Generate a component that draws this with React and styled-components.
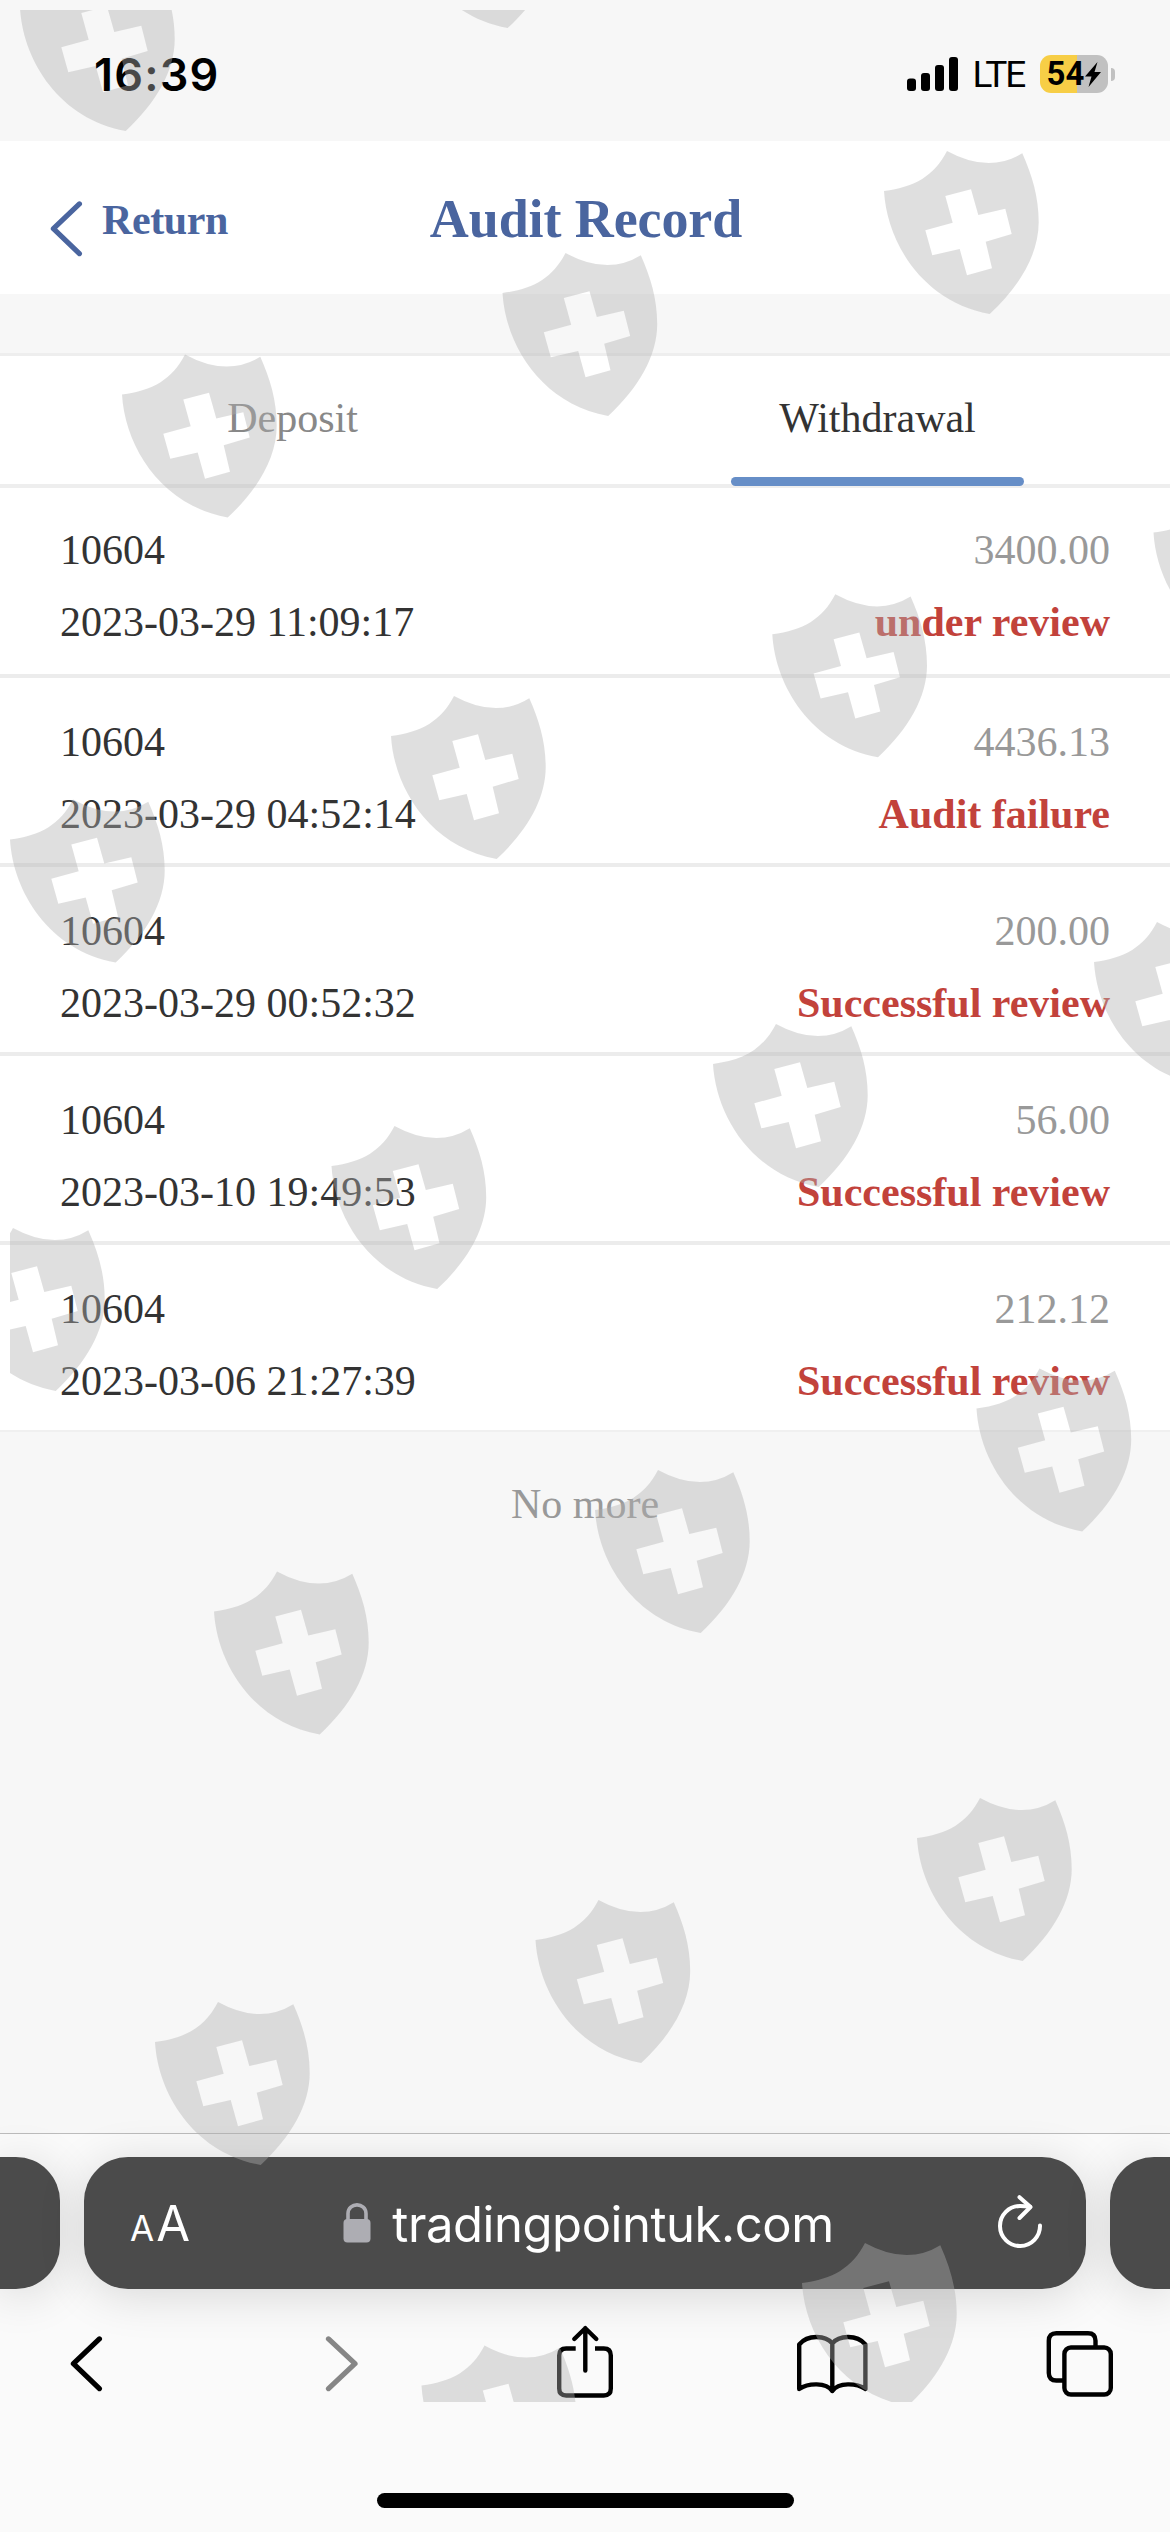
import React from "react";
import styled, { createGlobalStyle } from "styled-components";

const GlobalStyle = createGlobalStyle`
  *, *::before, *::after { box-sizing: border-box; }
  body { margin: 0; background: #f6f6f6; }
`;

const serif = `"Liberation Serif", "Times New Roman", serif`;
const sans = `Inter, Roboto, sans-serif`;

const Screen = styled.div`
  position: relative;
  display: flex;
  flex-direction: column;
  width: 1170px;
  height: 2532px;
  overflow: hidden;
  background: #f7f7f7;
  font-family: ${serif};
  font-size: 42px;
  color: #333;
`;

/* Status bar */
const StatusBar = styled.div`
  display: flex;
  justify-content: space-between;
  height: 141px;
  padding: 44px 55px 0 94px;
  font-family: ${sans};
  color: #000;
`;

const Clock = styled.div`
  height: 60px;
  line-height: 61px;
  font-size: 45px;
  font-weight: 600;
  letter-spacing: 1.2px;
`;

const StatusIcons = styled.div`
  display: flex;
  align-items: center;
  height: 60px;
`;

const Network = styled.span`
  margin: 1px 16px 0 14px;
  font-family: Roboto, sans-serif;
  font-size: 37px;
  line-height: 60px;
  letter-spacing: -2.2px;
`;

const Battery = styled.div`
  display: flex;
  align-items: center;
  justify-content: center;
  gap: 1px;
  width: 68px;
  height: 38px;
  border-radius: 11px;
  background: linear-gradient(90deg, #f7ce46 37.5px, #c1c1c1 37.5px);
  font-family: Roboto, sans-serif;
  font-size: 33px;
  font-weight: 700;
  line-height: 38px;
`;

const BatteryTip = styled.div`
  width: 4px;
  height: 13px;
  margin-left: 3px;
  border-radius: 0 4px 4px 0;
  background: #c1c1c1;
`;

/* Page header */
const Header = styled.header`
  display: grid;
  grid-template-columns: 1fr auto 1fr;
  align-items: center;
  height: 153px;
  padding: 3px 48px 0 50px;
  background: #fff;
  color: #4a659f;
  font-weight: 700;
`;

const BackLink = styled.div`
  display: flex;
  align-items: center;
  gap: 18px;
  padding-top: 2px;
  line-height: 48px;
  letter-spacing: -0.4px;

  svg { margin-top: 15px; }
`;

const Title = styled.h1`
  margin: 0;
  font-size: 54px;
  line-height: 62px;
  letter-spacing: -0.1px;
`;

/* Tabs */
const Tabs = styled.nav`
  display: flex;
  height: 135px;
  margin-top: 59px;
  border-top: 3px solid #eee;
  border-bottom: 4px solid #eee;
  background: #fff;
`;

const Tab = styled.div`
  position: relative;
  flex: 1;
  padding-bottom: 4px;
  line-height: 124px;
  text-align: center;
  color: ${(p) => (p.$active ? "#333" : "#888")};

  &::after {
    content: "";
    display: ${(p) => (p.$active ? "block" : "none")};
    position: absolute;
    left: 146px;
    bottom: -2px;
    width: 293px;
    height: 9px;
    border-radius: 5px;
    background: #668ec7;
  }
`;

/* Records */
const List = styled.div`
  height: 942px;
  background: #fff;
`;

const Record = styled.div`
  display: flex;
  flex-direction: column;
  gap: 24px;
  height: 189px;
  padding: 40px 60px 0 60px;
  border-bottom: 4px solid #ececec;
  line-height: 48px;

  &:first-child { height: 190px; padding-top: 38px; }
  &:last-child { height: 185px; border-bottom: 0; }
`;

const Line = styled.div`
  display: flex;
  justify-content: space-between;
`;

const Amount = styled.span`
  color: #999;
`;

const Status = styled.span`
  color: #c2423b;
  font-weight: 700;
`;

const NoMore = styled.div`
  flex: 1;
  padding-top: 48px;
  border-top: 2px solid #f0f0f0;
  line-height: 48px;
  text-align: center;
  color: #999;
`;

/* Browser chrome */
const Browser = styled.footer`
  display: flex;
  flex-direction: column;
  height: 399px;
  border-top: 1px solid #bcbcbc;
  background: #fafafa;
  font-family: ${sans};
`;

const AddressRow = styled.div`
  display: flex;
  gap: 24px;
  height: 155px;
  padding-top: 23px;
`;

const SideTab = styled.div`
  width: 60px;
  background: #4b4b4b;
  border-radius: ${(p) => (p.$left ? "0 44px 44px 0" : "44px 0 0 44px")};
  box-shadow: 0 6px 48px rgba(0, 0, 0, 0.14);
`;

const AddressBar = styled.div`
  display: flex;
  align-items: center;
  justify-content: space-between;
  width: 1002px;
  padding: 0 42px 0 46px;
  border-radius: 44px;
  background: #4b4b4b;
  color: #fff;
  box-shadow: 0 6px 48px rgba(0, 0, 0, 0.14);
`;

const TextSize = styled.div`
  display: flex;
  align-items: baseline;
  gap: 2px;
  width: 62px;
  margin-top: 5px;
  font-size: 49px;
  line-height: 60px;

  small { font-size: 35px; }
`;

const Address = styled.div`
  display: flex;
  align-items: center;
  gap: 21px;
  margin-right: 11px;
  font-size: 49px;
  line-height: 60px;
  letter-spacing: -0.45px;

  span { padding-top: 3px; }
`;

const Toolbar = styled.div`
  display: grid;
  grid-template-columns: 255px 231px 239px 250px 70px;
  align-items: center;
  height: 90px;
  margin-top: 29px;
  padding-left: 70px;
`;

const HomeIndicator = styled.div`
  width: 417px;
  height: 15px;
  margin: 85px auto 0;
  border-radius: 8px;
  background: #000;
`;

const Watermark = styled.svg`
  position: absolute;
  left: 10px;
  top: 10px;
  pointer-events: none;
`;

const records = [
  { id: "10604", time: "2023-03-29 11:09:17", amount: "3400.00", status: "under review" },
  { id: "10604", time: "2023-03-29 04:52:14", amount: "4436.13", status: "Audit failure" },
  { id: "10604", time: "2023-03-29 00:52:32", amount: "200.00", status: "Successful review" },
  { id: "10604", time: "2023-03-10 19:49:53", amount: "56.00", status: "Successful review" },
  { id: "10604", time: "2023-03-06 21:27:39", amount: "212.12", status: "Successful review" },
];

/* Anchor of every shield: the tip of its left horn */
const shields = [
  [83, -32], [465, -135],
  [947, 151], [565.5, 253], [185, 354.5],
  [1216.5, 492.5], [835.3, 594.3], [454, 696], [73, 799.5],
  [1157, 922], [776, 1024], [394.5, 1126], [13, 1228],
  [1039.5, 1368.5], [658, 1470], [277, 1571.5],
  [980, 1798], [598.5, 1900], [218, 2002],
  [865, 2243], [484.5, 2345.5],
];

const outline =
  "M0 0 Q42 23 75.3 2.3 C85 24 91.7 46 91.7 71 C91.7 103 73 135 42.7 163 C-24 151 -60 92 -63 40 C-32 36 -13 25 0 0 Z";
const cross =
  "M-1.7 45 L24 38.3 L31.3 64 L58.3 57.7 L64.7 83 L38.7 90.7 L45 117.3 L20 124.3 L12.7 98 L-14.7 104.3 L-21.7 79.3 L5.7 71.7 Z";

function Shields() {
  return (
    <Watermark width="1160" height="2392" viewBox="10 10 1160 2392" aria-hidden="true">
      {shields.map(([x, y]) => (
        <path
          key={`${x},${y}`}
          d={`${outline} ${cross}`}
          transform={`translate(${x} ${y})`}
          fill="#b0b0b0"
          fillOpacity="0.406"
          fillRule="evenodd"
        />
      ))}
    </Watermark>
  );
}

const Signal = () => (
  <svg width="52" height="34" viewBox="0 0 52 34">
    <rect x="0" y="21.5" width="9" height="12.5" rx="3" />
    <rect x="14" y="16" width="9" height="18" rx="3" />
    <rect x="28" y="8" width="9" height="26" rx="3" />
    <rect x="42" y="0" width="9" height="34" rx="3" />
  </svg>
);

const Bolt = () => (
  <svg width="16" height="25" viewBox="0 0 16 25">
    <path d="M12.5 0 L0 14.5 H6.5 L3.5 25 L16 10 H9.5 Z" />
  </svg>
);

const Chevron = ({ flip, color }) => (
  <svg width="34" height="60" viewBox="0 0 34 60" fill="none" stroke={color}
    strokeWidth="5.2" strokeLinecap="round" strokeLinejoin="round">
    <path d={flip ? "M3.5 5.9 L30 30.7 L3.5 55.6" : "M29.4 5.9 L3.4 30.7 L29.4 55.6"} />
  </svg>
);

const Lock = () => (
  <svg width="28" height="40" viewBox="0 0 28 40">
    <rect x="0.5" y="16" width="27" height="23.5" rx="4" fill="#adadb3" />
    <path d="M5 18 V10.5 C5 -1 23 -1 23 10.5 V18" fill="none" stroke="#adadb3" strokeWidth="3.6" />
  </svg>
);

const Reload = () => (
  <svg width="48" height="56" viewBox="0 0 48 56" fill="none" stroke="#fff" strokeWidth="4"
    strokeLinecap="round" strokeLinejoin="round">
    <path d="M44 30.5 A20 20 0 1 1 24 11 Q29 11 34 11.8" />
    <path d="M23.5 2.2 L34.5 12 L23.5 23" />
  </svg>
);

const Share = () => (
  <svg width="58" height="76" viewBox="0 0 58 76" fill="none" stroke="#000" strokeWidth="4.4"
    strokeLinecap="round" strokeLinejoin="round">
    <path d="M19.7 23.5 H10.2 Q3.2 23.5 3.2 30.5 V63.5 Q3.2 70.5 10.2 70.5 H47.8 Q54.8 70.5 54.8 63.5 V30.5 Q54.8 23.5 47.8 23.5 H39" strokeLinecap="butt" />
    <path d="M29.3 45.5 V3.2 M18.3 14 L29.3 3.2 L40.3 14" />
  </svg>
);

const Book = () => (
  <svg width="74" height="62" viewBox="0 0 74 62" fill="none" stroke="#000" strokeWidth="4.4"
    strokeLinecap="round" strokeLinejoin="round">
    <path d="M37.3 11.5 C31 3.5 13 2 4.2 12.5 V57 C13 51 31 50 37.3 59 C43.6 50 61.6 51 70.4 57 V12.5 C61.6 2 43.6 3.5 37.3 11.5 Z M37.3 11.5 V59" />
  </svg>
);

const TabsIcon = () => (
  <svg width="70" height="68" viewBox="0 0 70 68" fill="none" stroke="#000" strokeWidth="4.4">
    <path d="M19.4 51.5 H11.3 Q3.8 51.5 3.8 44 V11.7 Q3.8 4.2 11.3 4.2 H43 Q50.5 4.2 50.5 11.7 V18.5" />
    <rect x="19.4" y="18.5" width="46.4" height="47" rx="6.5" />
  </svg>
);

export default function App() {
  return (
    <>
      <GlobalStyle />
      <Screen>
        <StatusBar>
          <Clock>16:39</Clock>
          <StatusIcons>
            <Signal />
            <Network>LTE</Network>
            <Battery>
              <span>54</span>
              <Bolt />
            </Battery>
            <BatteryTip />
          </StatusIcons>
        </StatusBar>

        <Header>
          <BackLink>
            <Chevron color="#4a659f" />
            <span>Return</span>
          </BackLink>
          <Title>Audit Record</Title>
          <span />
        </Header>

        <Tabs>
          <Tab>Deposit</Tab>
          <Tab $active>Withdrawal</Tab>
        </Tabs>

        <List>
          {records.map((r) => (
            <Record key={r.time}>
              <Line>
                <span>{r.id}</span>
                <Amount>{r.amount}</Amount>
              </Line>
              <Line>
                <span>{r.time}</span>
                <Status>{r.status}</Status>
              </Line>
            </Record>
          ))}
        </List>

        <NoMore>No more</NoMore>

        <Browser>
          <AddressRow>
            <SideTab $left />
            <AddressBar>
              <TextSize>
                <small>A</small>
                <span>A</span>
              </TextSize>
              <Address>
                <Lock />
                <span>tradingpointuk.com</span>
              </Address>
              <Reload />
            </AddressBar>
            <SideTab />
          </AddressRow>
          <Toolbar>
            <Chevron color="#000" />
            <Chevron color="#868686" flip />
            <Share />
            <Book />
            <TabsIcon />
          </Toolbar>
          <HomeIndicator />
        </Browser>

        <Shields />
      </Screen>
    </>
  );
}
